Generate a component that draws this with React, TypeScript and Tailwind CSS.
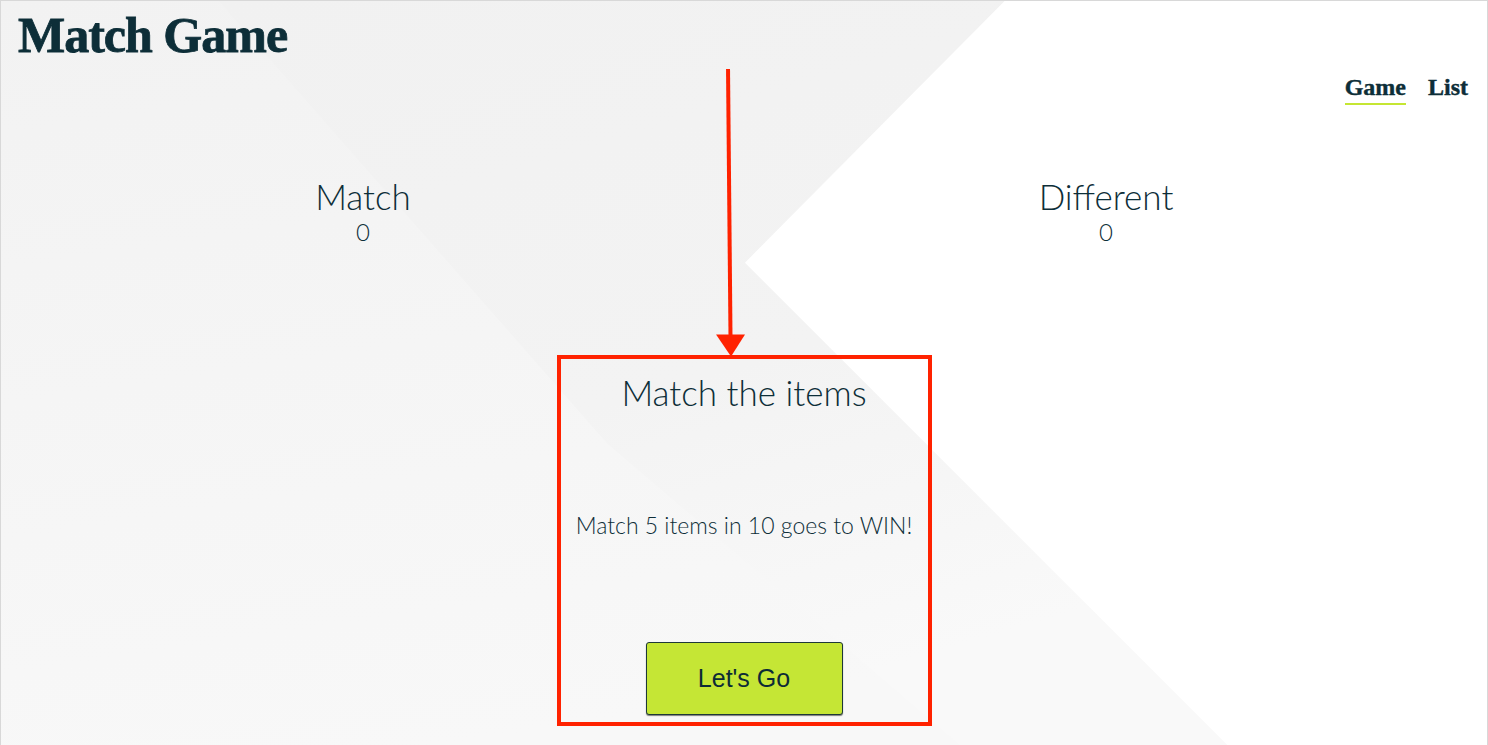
import React from 'react';

const ink = 'text-[#0d2e38]';

function Background() {
  return (
    <svg className="absolute inset-0 h-full w-full" viewBox="0 0 1488 745" preserveAspectRatio="none">
      <defs>
        <linearGradient id="base" x1="0" y1="0" x2="0.3" y2="1">
          <stop offset="0" stopColor="#f2f2f2" />
          <stop offset="1" stopColor="#f8f8f8" />
        </linearGradient>
        <linearGradient id="band" x1="0" y1="0" x2="0.4" y2="1">
          <stop offset="0" stopColor="#f1f1f1" />
          <stop offset="0.6" stopColor="#f3f3f3" />
          <stop offset="1" stopColor="#f9f9f9" />
        </linearGradient>
      </defs>
      <rect width="1488" height="745" fill="url(#base)" />
      <polygon points="218,0 1005,0 745,262 1228,745 960,745 607,443" fill="url(#band)" />
      <polygon points="1005,0 1488,0 1488,745 1228,745 745,262" fill="#ffffff" />
    </svg>
  );
}

function Annotation() {
  return (
    <svg className="pointer-events-none absolute inset-0 h-full w-full" viewBox="0 0 1488 745">
      <line x1="728" y1="68" x2="730.5" y2="338" stroke="#ff2200" strokeWidth="4" />
      <polygon points="716,334 745,334 731,356" fill="#ff2200" />
    </svg>
  );
}

function Stat({ label, value }: { label: string; value: number }) {
  return (
    <div className={`flex flex-col items-center font-['Lato'] font-light ${ink}`}>
      <div className="text-[35px] leading-[42px]">{label}</div>
      <div className="text-[24px] leading-[30px]">{value}</div>
    </div>
  );
}

export default function App() {
  return (
    <div className="relative h-[745px] w-full overflow-hidden border border-b-0 border-[#d8d8d8]">
      <Background />
      <div className="relative flex h-full flex-col">
        <header className="flex items-start justify-between">
          <h1 className={`pl-[17px] pt-[6px] font-['Liberation_Serif',serif] text-[50px] font-bold leading-[56px] tracking-[-1px] [-webkit-text-stroke:0.8px_#0d2e38] ${ink}`}>
            Match Game
          </h1>
          <nav className={`mt-[72px] mr-[19px] flex gap-[22px] font-['Liberation_Serif',serif] text-[24px] font-bold [-webkit-text-stroke:0.4px_#0d2e38] ${ink}`}>
            <a className="border-b-2 border-[#c5e633] pb-[1px] leading-[29px]">Game</a>
            <a className="leading-[29px]">List</a>
          </nav>
        </header>

        <section className="mt-[70px] grid grid-cols-[724px_1fr]">
          <Stat label="Match" value={0} />
          <Stat label="Different" value={0} />
        </section>

        <div className="mt-[108px] flex justify-center">
          <div className={`flex h-[371px] w-[375px] flex-col items-center border-4 border-[#ff2200] font-['Lato'] font-light ${ink}`}>
            <h2 className="mt-[12px] text-[35px] leading-[42px]">Match the items</h2>
            <p className="mt-[98px] text-[23px] leading-[28px]">Match 5 items in 10 goes to WIN!</p>
            <button className="mt-[103px] h-[73px] w-[197px] rounded-[3px] border border-[#1d3838] bg-[#c5e635] font-['Liberation_Sans',sans-serif] text-[25px] font-normal text-[#0d2b36] shadow-[0_1px_1px_rgba(0,0,0,0.5)]">
              Let's Go
            </button>
          </div>
        </div>
      </div>
      <Annotation />
    </div>
  );
}
